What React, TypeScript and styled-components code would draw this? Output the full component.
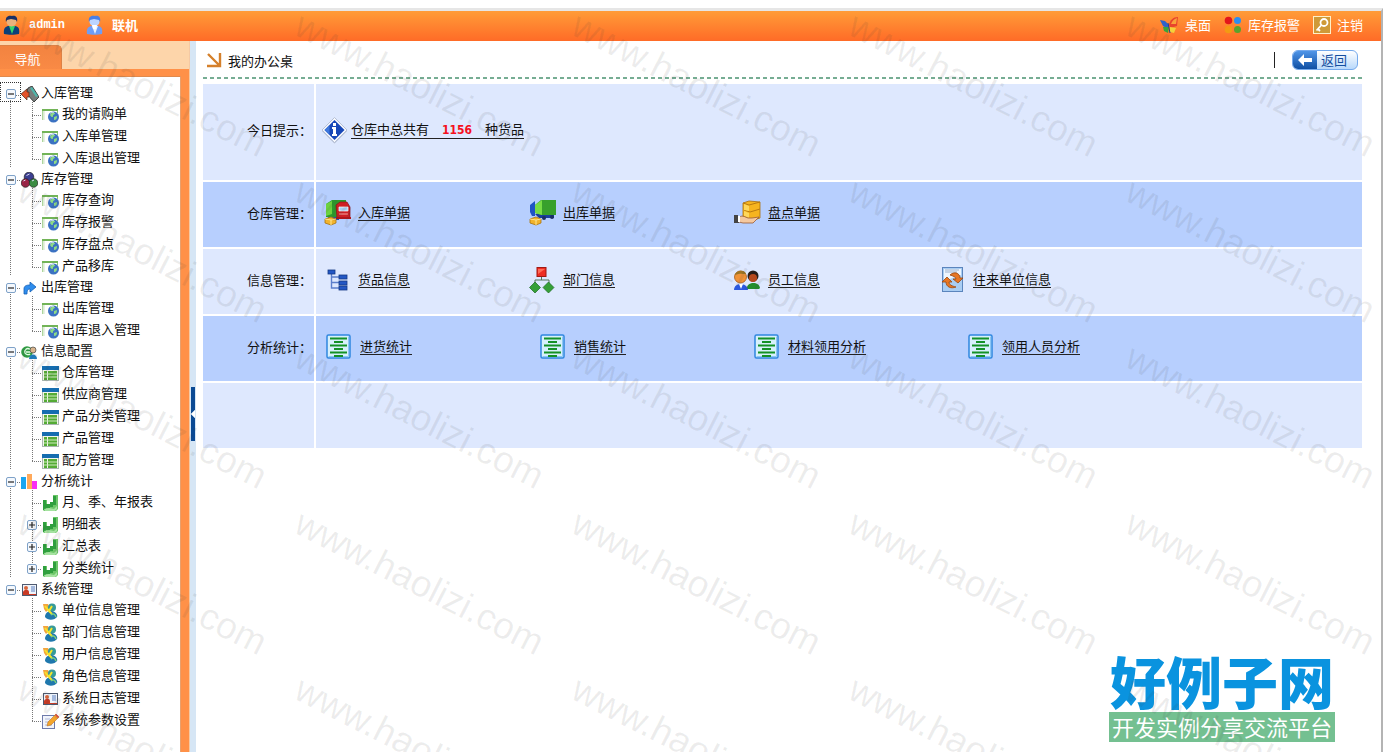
import React from "react";
import styled, { createGlobalStyle, css } from "styled-components";

const GlobalStyle = createGlobalStyle`
  *, *::before, *::after { box-sizing: border-box; }
  body {
    margin: 0;
    background: #fff;
    color: #111;
    font: 13px/20px "Noto Sans CJK SC", sans-serif;
  }
  a { color: inherit; text-decoration: none; }
  ul { list-style: none; margin: 0; padding: 0; }
  svg { display: block; flex: none; }
`;

/* ---------- frame ---------- */

const Page = styled.div`
  position: relative;
  min-height: 100vh;
  padding-top: 8px;
  display: flex;
  overflow: hidden;
`;

const Frame = styled.div`
  flex: 1;
  display: flex;
  flex-direction: column;
  border-top: 3px solid #e6e6e6;
  border-right: 2px solid #b4b4b4;
  margin-right: 1px;
`;

const TopBar = styled.header`
  height: 30px;
  display: flex;
  align-items: center;
  justify-content: space-between;
  padding: 0 18px 3px 2px;
  color: #fff;
  background: linear-gradient(#ff9c38, #ff6b27);
`;

const UserInfo = styled.div`
  display: flex;
  align-items: center;
  gap: 20px;
  font-weight: 700;
`;

const TopItem = styled.span`
  display: flex;
  align-items: center;
  gap: 8px;
`;

const UserName = styled.span`
  font: 700 12px/20px "Liberation Mono", monospace;
`;

const TopNav = styled.nav`
  display: flex;
  gap: 13px;
`;

const TopLink = styled.a`
  display: flex;
  align-items: center;
  gap: 6px;
`;

const Body = styled.div`
  flex: 1;
  display: flex;
`;

/* ---------- sidebar ---------- */

const Sidebar = styled.aside`
  width: 190px;
  flex: none;
  display: flex;
  flex-direction: column;
  background: #ff9148;
  border-right: 1px solid #f4c9a4;
`;

const TabStrip = styled.div`
  height: 28px;
  display: flex;
  align-items: flex-end;
  background: #fdd5aa;
`;

const Tab = styled.button`
  width: 62px;
  height: 24px;
  border: 0;
  border-top: 1px solid #dd8145;
  border-right: 1px solid #dd8145;
  border-radius: 0 5px 0 0;
  padding: 3px 6px 0 0;
  color: #fff;
  font: 13px/18px "Noto Sans CJK SC", sans-serif;
  text-align: center;
  background: linear-gradient(#f28340, #f98a45);
`;

const TreePanel = styled.nav`
  flex: 1;
  margin: 7px 8px 0 0;
  padding-top: 5px;
  background: #fff;
  border-top: 1px solid #e08a4e;
  border-right: 1px solid #e9a06c;
`;

const dots = "repeating-linear-gradient(#777 0 1px, transparent 1px 2px)";
const dotsAcross = "repeating-linear-gradient(90deg, #777 0 1px, transparent 1px 2px)";

const Group = styled.li`
  background: ${dots} 10px 10px / 1px 100% no-repeat;
  &:last-child { background: none; }
`;

const GroupRow = styled.div`
  height: 20px;
  display: flex;
  align-items: center;
`;

const GroupToggleCell = styled.span<{ $focused?: boolean }>`
  width: 21px;
  height: 20px;
  flex: none;
  display: flex;
  align-items: center;
  justify-content: center;
  background: ${dotsAcross} 15px 12px / 6px 1px no-repeat;
  padding-top: 4px;
  ${(p) => p.$focused && css`border: 1px dotted #333;`}
`;

const Toggle = styled.button`
  width: 10px;
  height: 10px;
  padding: 0;
  border: 1px solid #7fa2c8;
  border-radius: 2px;
  background: #f4f8fd;
`;

const TreeLink = styled.a`
  display: flex;
  align-items: center;
  gap: 3px;
  white-space: nowrap;
  line-height: 20px;
`;

const IconBox = styled.span`
  width: 17px;
  height: 20px;
  flex: none;
  display: flex;
  align-items: center;
  justify-content: center;
  padding-top: 4px;
`;

const Leaf = styled.li`
  height: 22px;
  display: flex;
  align-items: center;
  margin-left: 21px;
`;

const LeafGuide = styled.span<{ $last: boolean }>`
  width: 21px;
  height: 22px;
  flex: none;
  display: flex;
  align-items: center;
  padding: 3px 0 0 6px;
  background:
    ${dots} 11px 0 / 1px ${(p) => (p.$last ? "13px" : "22px")} no-repeat,
    ${dotsAcross} 11px 13px / 9px 1px no-repeat;
`;

const Splitter = styled.div`
  width: 6px;
  flex: none;
  background: #d6e6f5;
  padding: 346px 1px 0;
`;

const SplitHandle = styled.button`
  display: block;
  width: 4px;
  height: 54px;
  padding: 0;
  border: 0;
  background: none;
`;

/* ---------- main ---------- */

const Main = styled.main`
  flex: 1;
  min-width: 0;
  padding: 0 16px 0 7px;
`;

const TitleBar = styled.div`
  height: 38px;
  display: flex;
  align-items: center;
  justify-content: space-between;
  padding: 0 7px 0 3px;
  background: repeating-linear-gradient(90deg, #76ad93 0 4px, transparent 4px 7px) 0 100% / 100% 2px no-repeat;
`;

const Title = styled.h1`
  margin: 0;
  padding-top: 2px;
  display: flex;
  align-items: center;
  gap: 6px;
  font-size: 13px;
  font-weight: 400;
`;

const TitleActions = styled.div`
  display: flex;
  align-items: center;
  gap: 17px;
`;

const Divider = styled.span`
  width: 1px;
  height: 16px;
  background: #222;
`;

const BackButton = styled.button`
  height: 20px;
  width: 66px;
  display: flex;
  align-items: stretch;
  padding: 0;
  overflow: hidden;
  border: 1px solid #74a9ec;
  border-radius: 6px;
  background: linear-gradient(#fff, #b9d9fb);
  color: #164f9f;
  font: 13px/18px "Noto Sans CJK SC", sans-serif;
`;

const BackArrow = styled.span`
  width: 24px;
  margin-right: 4px;
  display: flex;
  align-items: center;
  justify-content: center;
  background: linear-gradient(#4f95e8, #0f4fa3);
`;

const Board = styled.div`
  margin: 5px 3px 0 0;
  display: flex;
  flex-direction: column;
  gap: 2px;
`;

const BoardRow = styled.section<{ $tone: "light" | "deep"; $tall?: boolean }>`
  display: grid;
  grid-template-columns: 111px 1fr;
  gap: 2px;
  min-height: ${(p) => (p.$tall ? 96 : 65)}px;
  & > * {
    padding-bottom: 4px;
    background: ${(p) => (p.$tone === "deep" ? "#b7cffe" : "#dee8fe")};
  }
`;

const RowLabel = styled.h2`
  margin: 0;
  display: flex;
  align-items: center;
  justify-content: flex-end;
  font-size: 13px;
  font-weight: 400;
  padding-right: 2px;
`;

const RowItems = styled.div<{ $wide?: boolean }>`
  display: grid;
  grid-template-columns: repeat(4, ${(p) => (p.$wide ? 214 : 205)}px);
  align-items: center;
  padding-left: ${(p) => (p.$wide ? 8 : 7)}px;
`;

const Notice = styled.div`
  display: flex;
  align-items: center;
  padding-left: 5px;
`;

const BoardLink = styled.a<{ $gap: number }>`
  display: flex;
  align-items: center;
  gap: ${(p) => p.$gap}px;
`;

const LinkText = styled.span`
  line-height: 16px;
  border-bottom: 1px solid #222;
  white-space: nowrap;
`;

const Count = styled.strong`
  color: #f5101d;
  font: 700 12px/16px "DejaVu Sans Condensed", "DejaVu Sans", sans-serif;
`;

/* ---------- overlays ---------- */

const Watermarks = styled.div`
  position: absolute;
  inset: 0;
  overflow: hidden;
  pointer-events: none;
  display: grid;
  grid-template-columns: repeat(5, 277px);
  grid-auto-rows: 166px;
  padding: 6px 0 0 29px;
`;

const Watermark = styled.span`
  font: 37px/37px "Liberation Sans", sans-serif;
  color: rgba(60, 60, 60, 0.09);
  white-space: nowrap;
  transform: rotate(27deg);
  transform-origin: 0 0;
`;

const SiteLogo = styled.div`
  position: absolute;
  right: 49px;
  bottom: 10px;
  text-align: center;
`;

const LogoName = styled.div`
  color: #0a93df;
  font: 900 56px/64px "Noto Sans CJK SC", sans-serif;
`;

const LogoTagline = styled.div`
  height: 30px;
  padding: 0 3px;
  background: #74c091;
  color: #fff;
  font: 22px/28px "Noto Sans CJK SC", sans-serif;
`;

/* ---------- icons ---------- */

const UserIcon = ({ blue }: { blue?: boolean }) => (
  <svg width="19" height="20" viewBox="0 0 19 20">
    <path d="M2 19c-1-6 2-8 5-8h5c4 0 6 2 5 8-4 1-11 1-15 0z" fill={blue ? "#6f9df5" : "#0d3f78"} />
    <path d="M7 11l3 8 3-8z" fill={blue ? "#e8f1ff" : "#35d46c"} />
    <circle cx="9.500" cy="6.500" r="5" fill={blue ? "#bcd4ff" : "#e9b27e"} />
    <path d="M4 7C3 2 6 0 10 1c4-1 6 2 5 6l-1-2-5-1-4 1z" fill={blue ? "#4a7fe6" : "#1a2f63"} />
    {blue && <path d="M7 10h5l-1 4H8z" fill="#fff" />}
  </svg>
);

const ButterflyIcon = () => (
  <svg width="19" height="18" viewBox="0 0 19 18">
    <path d="M0 4l5 1 4 4-1 4-5-3z" fill="#2f62c9" />
    <path d="M9 9c1-5 4-8 9-8l-1 9-7 2z" fill="#e8442c" />
    <path d="M11 8c1-3 3-5 6-6l-1 6z" fill="#f9a13a" />
    <path d="M3 11l6 0-1 6-4-2z" fill="#3aa63a" />
    <path d="M10 11l6 1-2 5-4-1z" fill="#f3d13b" />
    <path d="M8 7l2 10" stroke="#23438c" strokeWidth="1" />
  </svg>
);

const FourDotsIcon = () => (
  <svg width="18" height="18" viewBox="0 0 18 18">
    <circle cx="4.500" cy="4.500" r="3.800" fill="#e3161b" />
    <circle cx="13.500" cy="4.500" r="3.500" fill="#2c8df0" />
    <circle cx="4.500" cy="13.500" r="3.800" fill="#f39a13" />
    <circle cx="13.500" cy="13.500" r="3.500" fill="#5aa32d" />
  </svg>
);

const KeyIcon = () => (
  <svg width="18" height="18" viewBox="0 0 18 18">
    <rect x="0.500" y="0.500" width="17" height="17" fill="#cf9a38" stroke="#fff0c8" />
    <circle cx="11" cy="6.500" r="3.500" fill="none" stroke="#fff" strokeWidth="1.800" />
    <path d="M8.500 9L3.500 14.500M5 13l2 2" stroke="#fff" strokeWidth="1.800" fill="none" />
  </svg>
);

const Sign = ({ plus }: { plus?: boolean }) => (
  <svg width="8" height="8" viewBox="0 0 8 8">
    <path d={plus ? "M1 4h6M4 1v6" : "M1 4h6"} stroke="#222" strokeWidth="1.200" />
  </svg>
);

const icons: Record<string, React.ReactNode> = {
  inbound: (
    <svg width="18" height="17" viewBox="0 0 18 17">
      <path d="M7 2l4-2 7 11-5 5-8-9z" fill="#777d7b" stroke="#222" strokeWidth="0.800" />
      <path d="M9 2l2-1 6 9-2 1z" fill="#50b6ab" />
      <path d="M0 8l6-5v3h2v5H6v3z" fill="#e5532a" stroke="#4a2a1a" strokeWidth="0.700" />
    </svg>
  ),
  stock: (
    <svg width="17" height="16" viewBox="0 0 17 16">
      <circle cx="8" cy="5" r="4.800" fill="#3c3f91" stroke="#222" strokeWidth="0.700" />
      <circle cx="4.500" cy="11" r="4.300" fill="#9c2346" stroke="#222" strokeWidth="0.700" />
      <circle cx="12.500" cy="11" r="4.300" fill="#3b8c43" stroke="#222" strokeWidth="0.700" />
      <path d="M5.500 3.500l3-1.500M2.500 9l2-1M11 9l2-1" stroke="#d9dcf5" />
    </svg>
  ),
  outbound: (
    <svg width="13" height="13" viewBox="0 0 13 13">
      <path d="M1 12V7c0-3 2-4 6-4V0l6 5-6 5V7C5 7 4 8 4 12z" fill="#2f8ded" stroke="#1560b5" strokeWidth="0.800" />
    </svg>
  ),
  config: (
    <svg width="17" height="15" viewBox="0 0 17 15">
      <circle cx="6" cy="7" r="5.800" fill="#2f9a43" />
      <path d="M9 4.500C6 2 3 5 4 8c1 2 4 2 5 1M5 7h5" stroke="#e2ffe2" strokeWidth="1.400" fill="none" />
      <circle cx="12" cy="5" r="3" fill="#d9b48c" stroke="#444" strokeWidth="0.700" />
      <path d="M8 14c0-6 8-6 8 0z" fill="#1e7fc4" />
    </svg>
  ),
  bars: (
    <svg width="17" height="16" viewBox="0 0 17 16">
      <path d="M0 3h5v12H0z" fill="#1aa5f1" />
      <path d="M6 0h5v15H6z" fill="#ffa95b" />
      <path d="M11 7h5v8h-5z" fill="#f92cf4" />
    </svg>
  ),
  card: (
    <svg width="15" height="12" viewBox="0 0 15 12">
      <rect x="0.500" y="0.500" width="14" height="11" fill="#eef3fa" stroke="#4f5a70" />
      <path d="M1 10h13v1H1zM1 8c1-3 6-3 6 0v2H1z" fill="#c93a25" />
      <circle cx="4" cy="4" r="2" fill="#d8663a" />
      <path d="M9 3h4M9 5h4M9 7h4" stroke="#5a7fc0" />
    </svg>
  ),
  page: (
    <svg width="17" height="15" viewBox="0 0 17 15">
      <path d="M0.500 12V1.500h15V5" fill="#fff" stroke="#8cc474" />
      <path d="M0 1h16v2H0z" fill="#72b457" />
      <path d="M1 3v9M2 3v9" stroke="#cfe6c4" />
      <circle cx="11.500" cy="9" r="5.500" fill="#3b72c2" />
      <path d="M8 7c1-3 4-3 5-2 0 2-2 1-2 3s-2 1-3-1zM12 9l3-1c0 3-1 4-3 4z" fill="#8ddc86" />
      <path d="M8 5.500c1-1 3-1.500 4-1" stroke="#cfe6ff" />
    </svg>
  ),
  sheet: (
    <svg width="17" height="15" viewBox="0 0 17 15">
      <rect x="0.500" y="0.500" width="16" height="14" fill="#f0f5ea" stroke="#a9b7b0" />
      <path d="M0 0h17v4H0z" fill="#156db0" />
      <path d="M2 5h3v9H2zM6 5h9v9H6z" fill="#54ab35" />
      <path d="M2 8h13M2 11h13" stroke="#cfeabf" />
    </svg>
  ),
  chart: (
    <svg width="16" height="16" viewBox="0 0 16 16">
      <path d="M0 5h4v4h3V7h3V0h5v14l-2 2H1l-1-1z" fill="#6cc668" />
      <path d="M0 5h3v10H0zM3 9h4v4H3zM7 7h3v5H7zM10 1h3v9h-3z" fill="#2f9f3e" />
      <path d="M1 14l5-1 5 1 3-3v3l-2 2H2z" fill="#a5e2a0" />
    </svg>
  ),
  users: (
    <svg width="17" height="17" viewBox="0 0 17 17">
      <path d="M1 1h5l2 4-4 4-2-3z" fill="#f3a53e" />
      <circle cx="10" cy="4.500" r="4" fill="#379b9a" />
      <path d="M3 14c0-4 3-6 7-6 4 1 6 4 5 6-2 3-9 4-12 0z" fill="#1f78ad" />
      <path d="M3 3l4 5 3-5M7 8l3 3" stroke="#f4e42a" strokeWidth="2" fill="none" />
      <path d="M9 12c2-2 4-1 5 2" stroke="#7fd07c" strokeWidth="1.500" fill="none" />
    </svg>
  ),
  edit: (
    <svg width="17" height="15" viewBox="0 0 17 15">
      <rect x="0.500" y="1.500" width="12" height="13" fill="#f1f4fb" stroke="#6e7bab" />
      <path d="M3 5h5M3 8h4M3 11h7" stroke="#aeb8d6" />
      <path d="M5 12l1-4 8-8 3 3-8 8z" fill="#f4a62c" stroke="#b9722a" strokeWidth="0.600" />
      <path d="M13 1l1-1 3 3-1 1z" fill="#e5484d" />
    </svg>
  ),
};

const InfoIcon = () => (
  <svg width="27" height="27" viewBox="0 0 27 27">
    <path d="M13.500 1.500L26 14 13.500 26.500 1 14z" fill="#8b93a8" opacity="0.600" />
    <path d="M13.500 0.500L26 13 13.500 25.500 1 13z" fill="#f7f9fd" stroke="#b6c0d6" />
    <path d="M13.500 3L23.500 13 13.500 23 3.500 13z" fill="#1747b8" />
    <path d="M13.500 3L3.500 13l5 5V8z" fill="#3f78dc" />
    <path d="M12 6h3v3h-3zM11 10h4v7h1v2h-5v-2h1v-5h-1z" fill="#fff" />
  </svg>
);

const Crate = () => (
  <>
    <path d="M1 20l6-2 5 2v4l-5 2-6-2z" fill="#f2b32c" stroke="#a9730e" strokeWidth="0.800" />
    <path d="M1 20l6 1 5-1M7 21v5" stroke="#fde58d" fill="none" />
  </>
);

const TruckIn = () => (
  <svg width="27" height="27" viewBox="0 0 27 27">
    <path d="M3 17h12v4H6z" fill="#2250b4" />
    <path d="M2 5l6-4h14v7l-6 10H2z" fill="#2c9b2c" />
    <path d="M2 5l6-3v13l-6 2z" fill="#6dd23f" />
    <path d="M12 6l4-3h7l3 5v11H13z" fill="#cf1f24" stroke="#8d1114" strokeWidth="0.700" />
    <path d="M15 8h9v4h-9z" fill="#a9d1f5" stroke="#fff" strokeWidth="0.700" />
    <path d="M15 15h9" stroke="#f5a7a0" />
    <path d="M12 18h15v2H12z" fill="#b0161b" />
    <Crate />
  </svg>
);

const TruckOut = () => (
  <svg width="27" height="27" viewBox="0 0 27 27">
    <path d="M1 6l5-4v15H3l-2-4z" fill="#1f55c4" />
    <path d="M6 15h19v4H10z" fill="#183f9d" />
    <path d="M6 6l6-5h15v15H12l-6-2z" fill="#37a02c" />
    <path d="M6 6l7-5v15l-7-2z" fill="#76dc45" />
    <circle cx="15" cy="19" r="2" fill="#1a2e63" />
    <circle cx="23" cy="18" r="2" fill="#1a2e63" />
    <Crate />
  </svg>
);

const HandBoxIcon = () => (
  <svg width="27" height="25" viewBox="0 0 27 25">
    <path d="M9 3l6-2 11 1v16l-6 2-11-3z" fill="#f6b41f" stroke="#a96f0b" strokeWidth="0.800" />
    <path d="M9 3l6 2 11-3M10 10l6 2 10-3" fill="none" stroke="#b97a10" />
    <path d="M10 4l5 2v5l-5-1zM10 11l5 2v5l-5-2z" fill="#ffd75a" />
    <path d="M5 17c4-2 6 0 9 1h4l7-1-6 6H9l-4-1z" fill="#f5c9a0" stroke="#9a5b33" strokeWidth="0.800" />
    <path d="M0 15h4l1 8H0z" fill="#444" />
    <path d="M4 16h2v6H4z" fill="#fff" />
  </svg>
);

const TreeIcon = () => (
  <svg width="21" height="22" viewBox="0 0 21 22">
    <path d="M4.500 4v15H13M4.500 8H13M4.500 13.500H13" fill="none" stroke="#5c7fcb" strokeWidth="1.400" />
    <g fill="#2357c4" stroke="#143984" strokeWidth="0.800">
      <rect x="1" y="1" width="7" height="4" />
      <rect x="12" y="6" width="8" height="4" />
      <rect x="12" y="12" width="8" height="4" />
      <rect x="12" y="17" width="8" height="4" />
    </g>
  </svg>
);

const OrgIcon = () => (
  <svg width="26" height="26" viewBox="0 0 26 26">
    <path d="M12.500 9v4M6 17v-4h14v4" fill="none" stroke="#55765a" />
    <rect x="8" y="0.500" width="9" height="9" fill="#ee2d22" stroke="#a11913" />
    <path d="M9 2l7 0-7 5z" fill="#ff6a57" />
    <path d="M6 15l5.500 5.500L6 26 0.500 20.500zM19.500 15l5.500 5.500-5.500 5.500-5.500-5.500z" fill="#36a038" stroke="#1c6b22" strokeWidth="0.700" />
  </svg>
);

const StaffIcon = () => (
  <svg width="26" height="20" viewBox="0 0 26 20">
    <circle cx="19" cy="6" r="5.500" fill="#261d1a" />
    <circle cx="19" cy="8" r="4" fill="#b5481d" />
    <path d="M13 18c0-6 12-7 13 0l-1 1H13z" fill="#238d2b" />
    <circle cx="6.500" cy="7" r="6" fill="#f09338" stroke="#a85a15" strokeWidth="0.800" />
    <path d="M1 5c1-5 10-6 11-1-4 0-6-1-11 1z" fill="#9c7524" />
    <path d="M0 20c0-8 13-8 14 0z" fill="#2c58df" />
    <path d="M5 14h4l-2 5z" fill="#fff" />
  </svg>
);

const ExchangeIcon = () => (
  <svg width="21" height="25" viewBox="0 0 21 25">
    <rect x="0.500" y="0.500" width="20" height="24" fill="#a9cdf3" stroke="#5b85bd" />
    <path d="M2 2h17v6L2 14z" fill="#edf5fe" />
    <path d="M3 3h14M3 5h12" stroke="#9bb0cd" />
    <path d="M8 8c4-4 10-2 10 3h3l-5 5-5-4h3c0-2-3-3-6-4z" fill="#e77624" stroke="#9a470f" strokeWidth="0.800" />
    <path d="M14 20c-5 2-10 0-10-5H0l5-5 5 5H7c0 3 3 4 7 5z" fill="#e77624" stroke="#9a470f" strokeWidth="0.800" />
  </svg>
);

const ReportIcon = () => (
  <svg width="25" height="25" viewBox="0 0 25 25">
    <rect x="1" y="1" width="23" height="23" rx="1.500" fill="#d7f0fb" stroke="#2f86df" strokeWidth="1.500" />
    <path d="M2.500 22.500h20v-20" fill="none" stroke="#8cc6f5" />
    <path d="M4 4.500h17M8 8h9M4 11.500h17M8 15h9M4 18.500h17M8 22h9" stroke="#149126" strokeWidth="2" />
  </svg>
);

/* ---------- data ---------- */

type LeafData = { text: string; icon: string; expandable?: boolean };
type GroupData = { text: string; icon: string; items: LeafData[] };

const leaves = (icon: string, ...texts: string[]): LeafData[] => texts.map((text) => ({ text, icon }));

const tree: GroupData[] = [
  { text: "入库管理", icon: "inbound", items: leaves("page", "我的请购单", "入库单管理", "入库退出管理") },
  { text: "库存管理", icon: "stock", items: leaves("page", "库存查询", "库存报警", "库存盘点", "产品移库") },
  { text: "出库管理", icon: "outbound", items: leaves("page", "出库管理", "出库退入管理") },
  { text: "信息配置", icon: "config", items: leaves("sheet", "仓库管理", "供应商管理", "产品分类管理", "产品管理", "配方管理") },
  {
    text: "分析统计",
    icon: "bars",
    items: [
      { text: "月、季、年报表", icon: "chart" },
      { text: "明细表", icon: "chart", expandable: true },
      { text: "汇总表", icon: "chart", expandable: true },
      { text: "分类统计", icon: "chart", expandable: true },
    ],
  },
  {
    text: "系统管理",
    icon: "card",
    items: [
      ...leaves("users", "单位信息管理", "部门信息管理", "用户信息管理", "角色信息管理"),
      { text: "系统日志管理", icon: "card" },
      { text: "系统参数设置", icon: "edit" },
    ],
  },
];

type Entry = { text: string; icon: React.ReactNode };

const stockEntries: Entry[] = [
  { text: "入库单据", icon: <TruckIn /> },
  { text: "出库单据", icon: <TruckOut /> },
  { text: "盘点单据", icon: <HandBoxIcon /> },
];

const infoEntries: Entry[] = [
  { text: "货品信息", icon: <TreeIcon /> },
  { text: "部门信息", icon: <OrgIcon /> },
  { text: "员工信息", icon: <StaffIcon /> },
  { text: "往来单位信息", icon: <ExchangeIcon /> },
];

const reportEntries: Entry[] = ["进货统计", "销售统计", "材料领用分析", "领用人员分析"].map((text) => ({
  text,
  icon: <ReportIcon />,
}));

const EntryIcon = styled.span`
  width: 28px;
  display: flex;
  justify-content: center;
`;

const Entries = ({ items, wide }: { items: Entry[]; wide?: boolean }) => (
  <RowItems $wide={wide}>
    {items.map((item) => (
      <BoardLink key={item.text} href="#" $gap={wide ? 8 : 7}>
        <EntryIcon>{item.icon}</EntryIcon>
        <LinkText>{item.text}</LinkText>
      </BoardLink>
    ))}
  </RowItems>
);

export default function App() {
  return (
    <Page>
      <GlobalStyle />
      <Frame>
        <TopBar>
          <UserInfo>
            <TopItem><UserIcon /><UserName>admin</UserName></TopItem>
            <TopItem><UserIcon blue />联机</TopItem>
          </UserInfo>
          <TopNav>
            <TopLink href="#"><ButterflyIcon />桌面</TopLink>
            <TopLink href="#"><FourDotsIcon />库存报警</TopLink>
            <TopLink href="#"><KeyIcon />注销</TopLink>
          </TopNav>
        </TopBar>
        <Body>
          <Sidebar>
            <TabStrip><Tab type="button">导航</Tab></TabStrip>
            <TreePanel aria-label="导航">
              <ul>
                {tree.map((group, index) => (
                  <Group key={group.text}>
                    <GroupRow>
                      <GroupToggleCell $focused={index === 0}>
                        <Toggle type="button" aria-label={group.text}><Sign /></Toggle>
                      </GroupToggleCell>
                      <TreeLink href="#"><IconBox>{icons[group.icon]}</IconBox>{group.text}</TreeLink>
                    </GroupRow>
                    <ul>
                      {group.items.map((leaf, i) => (
                        <Leaf key={leaf.text}>
                          <LeafGuide $last={i === group.items.length - 1}>
                            {leaf.expandable && (
                              <Toggle type="button" aria-label={leaf.text}><Sign plus /></Toggle>
                            )}
                          </LeafGuide>
                          <TreeLink href="#"><IconBox>{icons[leaf.icon]}</IconBox>{leaf.text}</TreeLink>
                        </Leaf>
                      ))}
                    </ul>
                  </Group>
                ))}
              </ul>
            </TreePanel>
          </Sidebar>
          <Splitter>
            <SplitHandle type="button" aria-label="收起导航">
              <svg width="4" height="54" viewBox="0 0 4 54">
                <path d="M0 0h4v23L0 27l4 4v23H0z" fill="#0b4a94" />
                <path d="M4 23L0 27l4 4z" fill="#fff" />
              </svg>
            </SplitHandle>
          </Splitter>
          <Main>
            <TitleBar>
              <Title>
                <svg width="16" height="16" viewBox="0 0 16 16">
                  <path d="M2 1l11 11M14 0v13H1" fill="none" stroke="#d5802b" strokeWidth="2.400" />
                </svg>
                我的办公桌
              </Title>
              <TitleActions>
                <Divider />
                <BackButton type="button">
                  <BackArrow>
                    <svg width="14" height="12" viewBox="0 0 14 12">
                      <path d="M0 6l6-6v4h8v4H6v4z" fill="#fff" />
                    </svg>
                  </BackArrow>
                  返回
                </BackButton>
              </TitleActions>
            </TitleBar>
            <Board>
              <BoardRow $tone="light" $tall>
                <RowLabel>今日提示：</RowLabel>
                <Notice>
                  <BoardLink href="#" $gap={3}>
                    <InfoIcon />
                    <LinkText>仓库中总共有　<Count>1156</Count>　种货品</LinkText>
                  </BoardLink>
                </Notice>
              </BoardRow>
              <BoardRow $tone="deep">
                <RowLabel>仓库管理：</RowLabel>
                <Entries items={stockEntries} />
              </BoardRow>
              <BoardRow $tone="light">
                <RowLabel>信息管理：</RowLabel>
                <Entries items={infoEntries} />
              </BoardRow>
              <BoardRow $tone="deep">
                <RowLabel>分析统计：</RowLabel>
                <Entries items={reportEntries} wide />
              </BoardRow>
              <BoardRow $tone="light"><div /><div /></BoardRow>
            </Board>
          </Main>
        </Body>
      </Frame>
      <SiteLogo>
        <LogoName>好例子网</LogoName>
        <LogoTagline>开发实例分享交流平台</LogoTagline>
      </SiteLogo>
      <Watermarks aria-hidden="true">
        {Array.from({ length: 25 }, (_, i) => (
          <Watermark key={i}>www.haolizi.com</Watermark>
        ))}
      </Watermarks>
    </Page>
  );
}
